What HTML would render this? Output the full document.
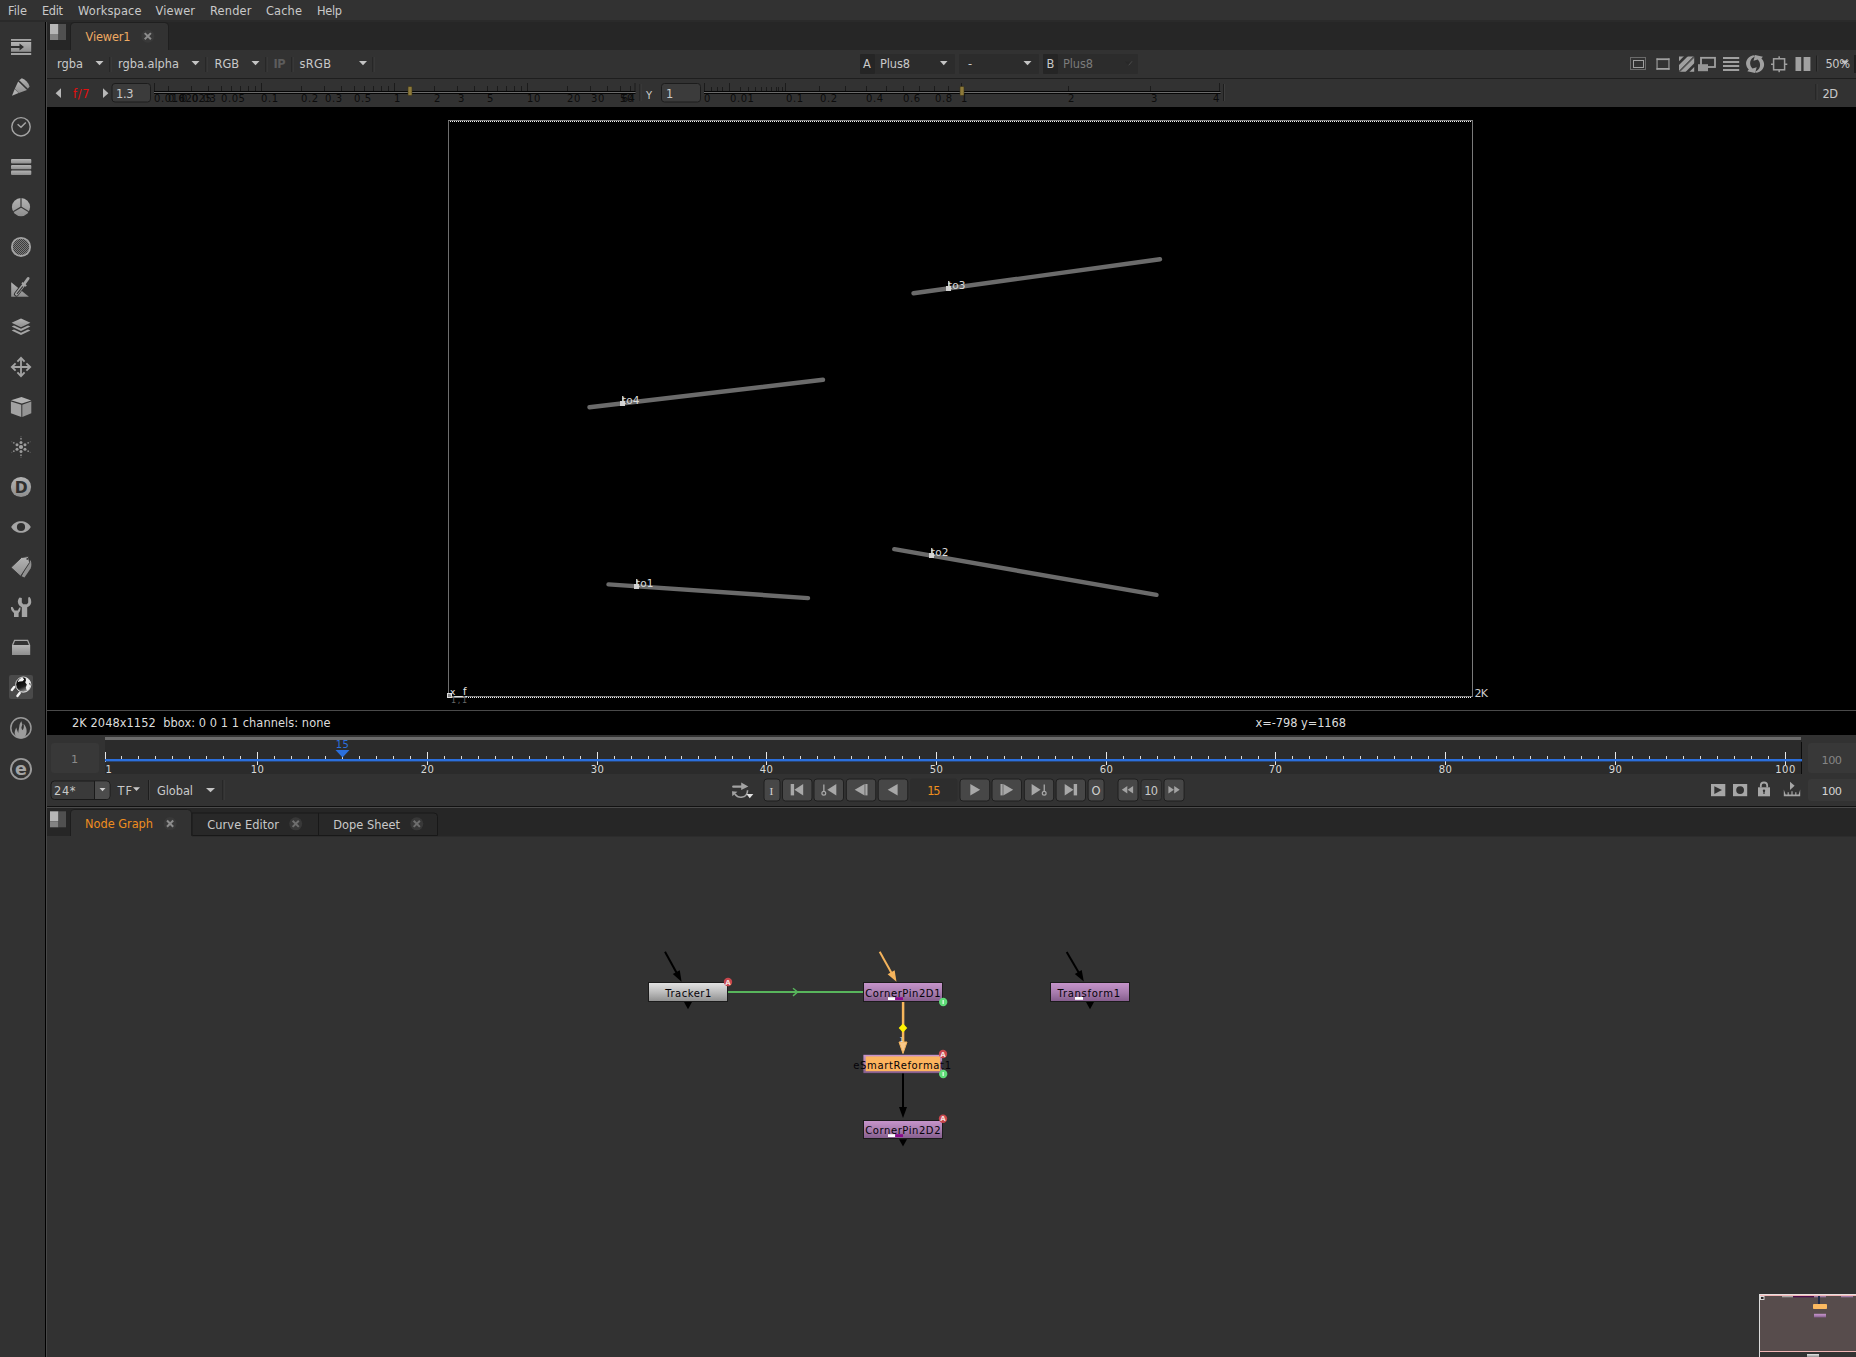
<!DOCTYPE html>
<html lang="en"><head><meta charset="utf-8"><title>Nuke - Viewer1 / Node Graph</title>
<style>
html,body{margin:0;padding:0;background:#323232;}
body{width:1856px;height:1357px;overflow:hidden;position:relative;font-family:"DejaVu Sans","Liberation Sans",sans-serif;}
#app{position:absolute;left:0;top:0;width:1856px;height:1357px;overflow:hidden;background:#323232;}
#app>div{position:absolute;}
#ov{position:absolute;left:0;top:0;}
#ov text{font-family:"DejaVu Sans","Liberation Sans",sans-serif;white-space:pre;}
</style></head>
<body>
<div id="app">
<div style="left:0px;top:0px;width:1856px;height:20px;background:#323232;"></div>
<div style="left:0px;top:20px;width:1856px;height:2px;background:#2a2a2a;"></div>
<div style="left:0px;top:22px;width:45px;height:1335px;background:#323232;"></div>
<div style="left:45px;top:22px;width:1px;height:1335px;background:#000;"></div>
<div style="left:46px;top:22px;width:1px;height:1335px;background:#484848;"></div>
<div style="left:47px;top:22px;width:1809px;height:28px;background:#262626;"></div>
<div style="left:47px;top:50px;width:1809px;height:28px;background:#323232;"></div>
<div style="left:47px;top:78px;width:1809px;height:1px;background:#1e1e1e;"></div>
<div style="left:47px;top:79px;width:1809px;height:28px;background:#323232;"></div>
<div style="left:47px;top:107px;width:1809px;height:628px;background:#000;"></div>
<div style="left:47px;top:710px;width:1809px;height:1px;background:#4a4a4a;"></div>
<div style="left:47px;top:735px;width:1809px;height:39px;background:#323232;"></div>
<div style="left:47px;top:774px;width:1809px;height:32px;background:#323232;"></div>
<div style="left:47px;top:806px;width:1809px;height:1px;background:#111;"></div>
<div style="left:47px;top:807px;width:1809px;height:1px;background:#4a4a4a;"></div>
<div style="left:47px;top:808px;width:1809px;height:28px;background:#262626;"></div>
<div style="left:47px;top:836px;width:1809px;height:521px;background:#323232;"></div>
<div style="left:192px;top:836px;width:1664px;height:1px;background:#2c2c2c;"></div>
<div style="left:105px;top:740px;width:1697px;height:34px;background:#2b2b2b;"></div>
<svg id="ov" width="1856" height="1357" viewBox="0 0 1856 1357">
<text x="8" y="15.3" font-size="11.4" fill="#c9c9c9" textLength="19" lengthAdjust="spacing">File</text>
<text x="42" y="15.3" font-size="11.4" fill="#c9c9c9" textLength="21" lengthAdjust="spacing">Edit</text>
<text x="78" y="15.3" font-size="11.4" fill="#c9c9c9" textLength="63.5" lengthAdjust="spacing">Workspace</text>
<text x="155.5" y="15.3" font-size="11.4" fill="#c9c9c9" textLength="39.5" lengthAdjust="spacing">Viewer</text>
<text x="210" y="15.3" font-size="11.4" fill="#c9c9c9" textLength="41.5" lengthAdjust="spacing">Render</text>
<text x="266" y="15.3" font-size="11.4" fill="#c9c9c9" textLength="36" lengthAdjust="spacing">Cache</text>
<text x="317" y="15.3" font-size="11.4" fill="#c9c9c9" textLength="25" lengthAdjust="spacing">Help</text>
<rect x="50" y="24" width="8.5" height="10" fill="#b6b6b6"/>
<rect x="50" y="34" width="8.5" height="6" fill="#828282"/>
<rect x="58.5" y="24" width="7.5" height="16" fill="#505050"/>
<path d="M71 50V26Q71 23 74 23H165Q168 23 168 26V50Z" fill="#323232"/>
<path d="M70.5 50V26Q70.5 22.5 74 22.5H165Q168.5 22.5 168.5 26V50" fill="none" stroke="#1f1f1f" stroke-width="1"/>
<text x="85.5" y="40.8" font-size="11.4" fill="#eeaa62" textLength="45" lengthAdjust="spacing">Viewer1</text>
<circle cx="147.8" cy="36.2" r="6.5" fill="#393939"/>
<path d="M144.7 33.1L150.9 39.3M150.9 33.1L144.7 39.3" fill="none" stroke="#8c8c8c" stroke-width="2"/>
<text x="57" y="68.3" font-size="11.4" fill="#c9c9c9" textLength="26" lengthAdjust="spacing">rgba</text>
<path d="M95.5 61H103.5L99.5 65.3Z" fill="#c4c4c4"/>
<rect x="109.5" y="57" width="1" height="15" fill="#1d1d1d"/>
<rect x="110.5" y="57" width="1" height="15" fill="#3e3e3e"/>
<text x="118" y="68.3" font-size="11.4" fill="#c9c9c9" textLength="61" lengthAdjust="spacing">rgba.alpha</text>
<path d="M191.5 61H199.5L195.5 65.3Z" fill="#c4c4c4"/>
<rect x="205.5" y="57" width="1" height="15" fill="#1d1d1d"/>
<rect x="206.5" y="57" width="1" height="15" fill="#3e3e3e"/>
<text x="214.5" y="68.3" font-size="11.4" fill="#c9c9c9" textLength="24.5" lengthAdjust="spacing">RGB</text>
<path d="M251.5 61H259.5L255.5 65.3Z" fill="#c4c4c4"/>
<rect x="265.5" y="57" width="1" height="15" fill="#1d1d1d"/>
<rect x="266.5" y="57" width="1" height="15" fill="#3e3e3e"/>
<text x="273.5" y="68.3" font-size="11.4" fill="#5c5c5c" textLength="12" lengthAdjust="spacing" font-weight="bold">IP</text>
<rect x="291.5" y="57" width="1" height="15" fill="#1d1d1d"/>
<rect x="292.5" y="57" width="1" height="15" fill="#3e3e3e"/>
<text x="299.5" y="68.3" font-size="11.4" fill="#c9c9c9" textLength="31.5" lengthAdjust="spacing">sRGB</text>
<path d="M359 61H367L363 65.3Z" fill="#c4c4c4"/>
<rect x="372.5" y="57" width="1" height="15" fill="#1d1d1d"/>
<rect x="373.5" y="57" width="1" height="15" fill="#3e3e3e"/>
<rect x="860" y="54" width="15" height="20" fill="#252525" rx="1"/>
<rect x="875" y="54" width="80" height="20" fill="#2c2c2c" rx="1"/>
<text x="863" y="68.3" font-size="11.4" fill="#c9c9c9" textLength="8" lengthAdjust="spacing">A</text>
<text x="880" y="68.3" font-size="11.4" fill="#c9c9c9" textLength="30" lengthAdjust="spacing">Plus8</text>
<path d="M940 61H947.5L943.75 65.3Z" fill="#c4c4c4"/>
<rect x="959" y="54" width="80" height="20" fill="#2c2c2c" rx="1"/>
<text x="968" y="68.3" font-size="11.4" fill="#c9c9c9">-</text>
<path d="M1023.5 61H1031.5L1027.5 65.3Z" fill="#c4c4c4"/>
<rect x="1043" y="54" width="15" height="20" fill="#252525" rx="1"/>
<rect x="1058" y="54" width="80" height="20" fill="#2c2c2c" rx="1"/>
<text x="1046.5" y="68.3" font-size="11.4" fill="#c9c9c9" textLength="7.5" lengthAdjust="spacing">B</text>
<text x="1063" y="68.3" font-size="11.4" fill="#7b7b7b" textLength="30" lengthAdjust="spacing">Plus8</text>
<path d="M1125 61.5H1132L1128.5 65.5Z" fill="#282828"/>
<path d="M1128.7 65.3L1132 61.3" fill="none" stroke="#4c4c4c" stroke-width="1"/>
<path d="M61 88.3V98L55.6 93.2Z" fill="#b8b8b8"/>
<path d="M103 88.3V98L108.4 93.2Z" fill="#b8b8b8"/>
<text x="73" y="98.3" font-size="11.4" fill="#e30f0f" textLength="16.5" lengthAdjust="spacing">f/7</text>
<rect x="112" y="83.5" width="38.5" height="18.5" rx="3" fill="#3b3b3b" stroke="#1c1c1c"/>
<text x="116" y="98.3" font-size="11.4" fill="#c9c9c9" textLength="17.5" lengthAdjust="spacing">1.3</text>
<rect x="154" y="91" width="481.5" height="1" fill="#050505"/>
<rect x="154" y="92" width="481.5" height="1" fill="#6c6c6c"/>
<rect x="154" y="93" width="481.5" height="1" fill="#050505"/>
<rect x="154" y="83" width="1" height="8" fill="#1b1b1b"/>
<rect x="634.5" y="83" width="1" height="8" fill="#1b1b1b"/>
<rect x="168" y="86" width="1" height="5" fill="#1b1b1b"/>
<rect x="191" y="86" width="1" height="5" fill="#1b1b1b"/>
<rect x="208" y="86" width="1" height="5" fill="#1b1b1b"/>
<rect x="221" y="86" width="1" height="5" fill="#1b1b1b"/>
<rect x="231" y="86" width="1" height="5" fill="#1b1b1b"/>
<rect x="240" y="86" width="1" height="5" fill="#1b1b1b"/>
<rect x="248" y="86" width="1" height="5" fill="#1b1b1b"/>
<rect x="255" y="86" width="1" height="5" fill="#1b1b1b"/>
<rect x="261" y="83" width="1" height="8" fill="#1b1b1b"/>
<rect x="301" y="86" width="1" height="5" fill="#1b1b1b"/>
<rect x="324" y="86" width="1" height="5" fill="#1b1b1b"/>
<rect x="341" y="86" width="1" height="5" fill="#1b1b1b"/>
<rect x="354" y="86" width="1" height="5" fill="#1b1b1b"/>
<rect x="364" y="86" width="1" height="5" fill="#1b1b1b"/>
<rect x="373" y="86" width="1" height="5" fill="#1b1b1b"/>
<rect x="381" y="86" width="1" height="5" fill="#1b1b1b"/>
<rect x="388" y="86" width="1" height="5" fill="#1b1b1b"/>
<rect x="394" y="83" width="1" height="8" fill="#1b1b1b"/>
<rect x="434" y="86" width="1" height="5" fill="#1b1b1b"/>
<rect x="457" y="86" width="1" height="5" fill="#1b1b1b"/>
<rect x="474" y="86" width="1" height="5" fill="#1b1b1b"/>
<rect x="487" y="86" width="1" height="5" fill="#1b1b1b"/>
<rect x="497" y="86" width="1" height="5" fill="#1b1b1b"/>
<rect x="506" y="86" width="1" height="5" fill="#1b1b1b"/>
<rect x="514" y="86" width="1" height="5" fill="#1b1b1b"/>
<rect x="521" y="86" width="1" height="5" fill="#1b1b1b"/>
<rect x="527" y="83" width="1" height="8" fill="#1b1b1b"/>
<rect x="567" y="86" width="1" height="5" fill="#1b1b1b"/>
<rect x="590" y="86" width="1" height="5" fill="#1b1b1b"/>
<rect x="607" y="86" width="1" height="5" fill="#1b1b1b"/>
<rect x="620" y="86" width="1" height="5" fill="#1b1b1b"/>
<rect x="630" y="86" width="1" height="5" fill="#1b1b1b"/>
<text x="154" y="101.7" font-size="10" fill="#0c0c0c" letter-spacing="0.55">0.016</text>
<text x="168" y="101.7" font-size="10" fill="#0c0c0c" letter-spacing="0.55">0.02</text>
<text x="181" y="101.7" font-size="10" fill="#0c0c0c" letter-spacing="0.55">0.025</text>
<text x="192" y="101.7" font-size="10" fill="#0c0c0c" letter-spacing="0.55">0.03</text>
<text x="221" y="101.7" font-size="10" fill="#0c0c0c" letter-spacing="0.55">0.05</text>
<text x="261" y="101.7" font-size="10" fill="#0c0c0c" letter-spacing="0.55">0.1</text>
<text x="301" y="101.7" font-size="10" fill="#0c0c0c" letter-spacing="0.55">0.2</text>
<text x="325" y="101.7" font-size="10" fill="#0c0c0c" letter-spacing="0.55">0.3</text>
<text x="354" y="101.7" font-size="10" fill="#0c0c0c" letter-spacing="0.55">0.5</text>
<text x="394" y="101.7" font-size="10" fill="#0c0c0c" letter-spacing="0.55">1</text>
<text x="434" y="101.7" font-size="10" fill="#0c0c0c" letter-spacing="0.55">2</text>
<text x="458" y="101.7" font-size="10" fill="#0c0c0c" letter-spacing="0.55">3</text>
<text x="487" y="101.7" font-size="10" fill="#0c0c0c" letter-spacing="0.55">5</text>
<text x="527" y="101.7" font-size="10" fill="#0c0c0c" letter-spacing="0.55">10</text>
<text x="567" y="101.7" font-size="10" fill="#0c0c0c" letter-spacing="0.55">20</text>
<text x="591" y="101.7" font-size="10" fill="#0c0c0c" letter-spacing="0.55">30</text>
<text x="620" y="101.7" font-size="10" fill="#0c0c0c" letter-spacing="0.55">50</text>
<text x="635.5" y="101.7" font-size="10" fill="#0c0c0c" text-anchor="end" letter-spacing="0.55">64</text>
<rect x="408" y="86.5" width="4" height="9" fill="#8d7a3a" rx="0.8" stroke="#3a3218" stroke-width="0.6"/>
<rect x="639.5" y="84" width="1" height="17" fill="#1d1d1d"/>
<rect x="640.5" y="84" width="1" height="17" fill="#3e3e3e"/>
<text x="646" y="98.8" font-size="10" fill="#c9c9c9" textLength="7" lengthAdjust="spacing">Y</text>
<rect x="661.5" y="83.5" width="39" height="18.5" rx="3" fill="#3b3b3b" stroke="#1c1c1c"/>
<text x="666" y="98.3" font-size="11.4" fill="#c9c9c9">1</text>
<rect x="704" y="91" width="516.5" height="1" fill="#050505"/>
<rect x="704" y="92" width="516.5" height="1" fill="#6c6c6c"/>
<rect x="704" y="93" width="516.5" height="1" fill="#050505"/>
<rect x="704" y="83" width="1" height="8" fill="#1b1b1b"/>
<rect x="729" y="83" width="1" height="8" fill="#1b1b1b"/>
<rect x="785" y="83" width="1" height="8" fill="#1b1b1b"/>
<rect x="819" y="86" width="1" height="5" fill="#1b1b1b"/>
<rect x="845" y="86" width="1" height="5" fill="#1b1b1b"/>
<rect x="866" y="86" width="1" height="5" fill="#1b1b1b"/>
<rect x="886" y="86" width="1" height="5" fill="#1b1b1b"/>
<rect x="903" y="86" width="1" height="5" fill="#1b1b1b"/>
<rect x="919" y="86" width="1" height="5" fill="#1b1b1b"/>
<rect x="934" y="86" width="1" height="5" fill="#1b1b1b"/>
<rect x="948" y="86" width="1" height="5" fill="#1b1b1b"/>
<rect x="961" y="83" width="1" height="8" fill="#1b1b1b"/>
<rect x="1068" y="86" width="1" height="5" fill="#1b1b1b"/>
<rect x="1150" y="86" width="1" height="5" fill="#1b1b1b"/>
<rect x="1219" y="83" width="1" height="8" fill="#1b1b1b"/>
<rect x="711" y="87" width="1" height="4" fill="#1b1b1b"/>
<rect x="717" y="87" width="1" height="4" fill="#1b1b1b"/>
<rect x="722" y="87" width="1" height="4" fill="#1b1b1b"/>
<rect x="740" y="87" width="1" height="4" fill="#1b1b1b"/>
<rect x="748" y="87" width="1" height="4" fill="#1b1b1b"/>
<rect x="755" y="87" width="1" height="4" fill="#1b1b1b"/>
<rect x="761" y="87" width="1" height="4" fill="#1b1b1b"/>
<rect x="766" y="87" width="1" height="4" fill="#1b1b1b"/>
<rect x="771" y="87" width="1" height="4" fill="#1b1b1b"/>
<rect x="776" y="87" width="1" height="4" fill="#1b1b1b"/>
<rect x="778" y="87" width="1" height="4" fill="#1b1b1b"/>
<rect x="782" y="87" width="1" height="4" fill="#1b1b1b"/>
<text x="704" y="101.7" font-size="10" fill="#0c0c0c" letter-spacing="0.55">0</text>
<text x="730" y="101.7" font-size="10" fill="#0c0c0c" letter-spacing="0.55">0.01</text>
<text x="786" y="101.7" font-size="10" fill="#0c0c0c" letter-spacing="0.55">0.1</text>
<text x="820" y="101.7" font-size="10" fill="#0c0c0c" letter-spacing="0.55">0.2</text>
<text x="866" y="101.7" font-size="10" fill="#0c0c0c" letter-spacing="0.55">0.4</text>
<text x="903" y="101.7" font-size="10" fill="#0c0c0c" letter-spacing="0.55">0.6</text>
<text x="935" y="101.7" font-size="10" fill="#0c0c0c" letter-spacing="0.55">0.8</text>
<text x="961" y="101.7" font-size="10" fill="#0c0c0c" letter-spacing="0.55">1</text>
<text x="1068" y="101.7" font-size="10" fill="#0c0c0c" letter-spacing="0.55">2</text>
<text x="1151" y="101.7" font-size="10" fill="#0c0c0c" letter-spacing="0.55">3</text>
<text x="1213" y="101.7" font-size="10" fill="#0c0c0c">4</text>
<rect x="960" y="86.5" width="4" height="9" fill="#8d7a3a" rx="0.8" stroke="#3a3218" stroke-width="0.6"/>
<rect x="1223" y="84" width="1" height="17" fill="#1d1d1d"/>
<rect x="1224" y="84" width="1" height="17" fill="#3e3e3e"/>
<rect x="1630.5" y="57.5" width="15" height="12" fill="none" stroke="#6a6a6a"/>
<rect x="1633.5" y="60.5" width="10" height="7" fill="none" stroke="#a0a0a0" stroke-width="1"/>
<rect x="1656.5" y="58.3" width="13" height="1.8" fill="#a0a0a0"/>
<rect x="1656.5" y="68" width="13" height="1.8" fill="#a0a0a0"/>
<rect x="1656.5" y="58.3" width="1.1" height="11.5" fill="#a0a0a0"/>
<rect x="1668.4" y="58.3" width="1.1" height="11.5" fill="#a0a0a0"/>
<clipPath id="cs"><rect x="1679" y="56.5" width="15.2" height="15.3"/></clipPath>
<g clip-path="url(#cs)"><line x1="1684" y1="51.5" x2="1674" y2="61.5" stroke="#a0a0a0" stroke-width="6.6"/><line x1="1695.5" y1="51.5" x2="1674" y2="73" stroke="#a0a0a0" stroke-width="4.1"/><line x1="1703.1" y1="51.5" x2="1674" y2="80.6" stroke="#a0a0a0" stroke-width="4.1"/><line x1="1714.5" y1="51.5" x2="1674" y2="92" stroke="#a0a0a0" stroke-width="6.6"/><line x1="1699.3" y1="51.5" x2="1674" y2="76.8" stroke="#555" stroke-width="1.2"/></g>
<rect x="1701" y="57.8" width="14" height="9.2" fill="none" stroke="#a0a0a0" stroke-width="1.8"/>
<rect x="1698" y="64.2" width="10" height="7" fill="#969696"/>
<rect x="1723" y="57" width="16.2" height="2" fill="#a0a0a0"/>
<rect x="1723" y="61" width="16.2" height="2" fill="#a0a0a0"/>
<rect x="1723" y="65" width="16.2" height="2" fill="#a0a0a0"/>
<rect x="1723" y="69" width="16.2" height="2" fill="#a0a0a0"/>
<g transform="translate(1755.1 64)" fill="#a0a0a0"><path d="M-0.6 -8.7C-6.4 -8.4 -9.7 -3.6 -8.9 0.8C-8.5 2.8 -7.6 4.3 -6.3 5.5L-7.8 7.2L0 8.9L1.6 3.2L-2.6 4.6C-4.6 2.8 -5.4 0 -4.8 -2.4C-4.2 -4.8 -2.6 -6.6 -0.2 -7.6Z"/><path d="M-0.6 -8.7C-6.4 -8.4 -9.7 -3.6 -8.9 0.8C-8.5 2.8 -7.6 4.3 -6.3 5.5L-7.8 7.2L0 8.9L1.6 3.2L-2.6 4.6C-4.6 2.8 -5.4 0 -4.8 -2.4C-4.2 -4.8 -2.6 -6.6 -0.2 -7.6Z" transform="rotate(180)"/></g>
<rect x="1773.6" y="58.8" width="11" height="11" fill="none" stroke="#a0a0a0" stroke-width="1.5"/>
<rect x="1778.4" y="56.3" width="1.5" height="2.5" fill="#a0a0a0"/>
<rect x="1778.4" y="69.8" width="1.5" height="2.4" fill="#a0a0a0"/>
<rect x="1771" y="63.5" width="2.5" height="1.5" fill="#a0a0a0"/>
<rect x="1784.8" y="63.5" width="2.5" height="1.5" fill="#a0a0a0"/>
<rect x="1795.5" y="57" width="5.7" height="14" fill="#a0a0a0"/>
<rect x="1803.6" y="57" width="6.8" height="14" fill="#a0a0a0"/>
<rect x="1816.2" y="55.5" width="1" height="16" fill="#1d1d1d"/>
<rect x="1817.2" y="55.5" width="1" height="16" fill="#3e3e3e"/>
<text x="1825.5" y="68.3" font-size="11.4" fill="#c9c9c9" textLength="24.5" lengthAdjust="spacing">50%</text>
<path d="M1841 60.5H1849L1845 64.8Z" fill="#c4c4c4"/>
<rect x="1854" y="55" width="2" height="18" fill="#1e1e1e"/>
<rect x="1815.5" y="84" width="1" height="16" fill="#1d1d1d"/>
<rect x="1816.5" y="84" width="1" height="16" fill="#3e3e3e"/>
<text x="1822.5" y="98.3" font-size="11.4" fill="#c9c9c9" textLength="15.5" lengthAdjust="spacing">2D</text>
<rect x="448" y="120" width="1" height="577" fill="#6e6e6e"/>
<rect x="1472" y="120" width="1" height="577" fill="#7a7a7a"/>
<rect x="448" y="120" width="1025" height="1" fill="#808080"/>
<rect x="448" y="696" width="1025" height="1" fill="#808080"/>
<line x1="450" y1="121.5" x2="1472" y2="121.5" stroke="#f2f2f2" stroke-width="1" stroke-dasharray="1 1"/>
<line x1="468" y1="697.5" x2="1472" y2="697.5" stroke="#f2f2f2" stroke-width="1" stroke-dasharray="1 1"/>
<line x1="913.5" y1="293.2" x2="1160" y2="259.3" stroke="#6b6b6b" stroke-width="4.4" stroke-linecap="round"/>
<line x1="589.5" y1="407.3" x2="823" y2="379.8" stroke="#6b6b6b" stroke-width="4.4" stroke-linecap="round"/>
<line x1="608.5" y1="584.4" x2="808" y2="598.1" stroke="#6b6b6b" stroke-width="4.4" stroke-linecap="round"/>
<line x1="894.3" y1="549.2" x2="1156.5" y2="594.9" stroke="#6b6b6b" stroke-width="4.4" stroke-linecap="round"/>
<rect x="946" y="286" width="5" height="5" fill="#d2d2d2"/>
<rect x="948" y="281" width="1" height="5" fill="#bdbdbd"/>
<text x="948" y="288.5" font-size="10.5" fill="#dadada" textLength="17.5" lengthAdjust="spacing">to3</text>
<rect x="620" y="401" width="5" height="5" fill="#d2d2d2"/>
<rect x="622" y="396" width="1" height="5" fill="#bdbdbd"/>
<text x="622" y="403.5" font-size="10.5" fill="#dadada" textLength="17.5" lengthAdjust="spacing">to4</text>
<rect x="634" y="584" width="5" height="5" fill="#d2d2d2"/>
<rect x="636" y="579" width="1" height="5" fill="#bdbdbd"/>
<text x="636" y="586.5" font-size="10.5" fill="#dadada" textLength="17.5" lengthAdjust="spacing">to1</text>
<rect x="929" y="553" width="5" height="5" fill="#d2d2d2"/>
<rect x="931" y="548" width="1" height="5" fill="#bdbdbd"/>
<text x="931" y="555.5" font-size="10.5" fill="#dadada" textLength="17.5" lengthAdjust="spacing">to2</text>
<text x="1474.5" y="697" font-size="11" fill="#d0d0d0" textLength="13.5" lengthAdjust="spacing">2K</text>
<rect x="447.5" y="693.5" width="4" height="4" fill="#888" stroke="#ddd"/>
<rect x="452" y="696" width="15" height="1.6" fill="#e0e0e0"/>
<text x="450" y="694.5" font-size="9" fill="#e6e6e6">x</text>
<text x="463" y="695" font-size="10" fill="#e6e6e6">f</text>
<text x="451" y="702.5" font-size="8" fill="#6a6a6a" textLength="16" lengthAdjust="spacing">1,1</text>
<text x="72" y="726.8" font-size="11.4" fill="#dcdcdc" textLength="258.5" lengthAdjust="spacing" xml:space="preserve">2K 2048x1152  bbox: 0 0 1 1 channels: none</text>
<text x="1255.5" y="726.8" font-size="11.4" fill="#dcdcdc" textLength="90.5" lengthAdjust="spacing">x=-798 y=1168</text>
<rect x="105" y="737" width="1696" height="3" fill="#6c6c6c"/>
<rect x="1801" y="742" width="1" height="32" fill="#0c0c0c"/>
<rect x="51" y="743" width="48" height="30" fill="#383838" rx="3"/>
<text x="74.5" y="763.4" font-size="11.3" fill="#8a8a8a" text-anchor="middle">1</text>
<rect x="1808" y="743" width="60" height="30" fill="#383838" rx="3"/>
<text x="1821.5" y="763.6" font-size="11.3" fill="#858585" textLength="20.5" lengthAdjust="spacing">100</text>
<rect x="105" y="752" width="1" height="10" fill="#e6e6e6"/>
<rect x="121" y="756" width="1" height="3" fill="#dcdcdc"/>
<rect x="138" y="756" width="1" height="3" fill="#dcdcdc"/>
<rect x="155" y="756" width="1" height="3" fill="#dcdcdc"/>
<rect x="172" y="756" width="1" height="3" fill="#dcdcdc"/>
<rect x="189" y="756" width="1" height="3" fill="#dcdcdc"/>
<rect x="206" y="756" width="1" height="3" fill="#dcdcdc"/>
<rect x="223" y="756" width="1" height="3" fill="#dcdcdc"/>
<rect x="240" y="756" width="1" height="3" fill="#dcdcdc"/>
<rect x="257" y="752" width="1" height="13" fill="#e6e6e6"/>
<rect x="274" y="756" width="1" height="3" fill="#dcdcdc"/>
<rect x="291" y="756" width="1" height="3" fill="#dcdcdc"/>
<rect x="308" y="756" width="1" height="3" fill="#dcdcdc"/>
<rect x="325" y="756" width="1" height="3" fill="#dcdcdc"/>
<rect x="342" y="756" width="1" height="3" fill="#dcdcdc"/>
<rect x="359" y="756" width="1" height="3" fill="#dcdcdc"/>
<rect x="376" y="756" width="1" height="3" fill="#dcdcdc"/>
<rect x="393" y="756" width="1" height="3" fill="#dcdcdc"/>
<rect x="410" y="756" width="1" height="3" fill="#dcdcdc"/>
<rect x="427" y="752" width="1" height="13" fill="#e6e6e6"/>
<rect x="444" y="756" width="1" height="3" fill="#dcdcdc"/>
<rect x="461" y="756" width="1" height="3" fill="#dcdcdc"/>
<rect x="478" y="756" width="1" height="3" fill="#dcdcdc"/>
<rect x="495" y="756" width="1" height="3" fill="#dcdcdc"/>
<rect x="512" y="756" width="1" height="3" fill="#dcdcdc"/>
<rect x="529" y="756" width="1" height="3" fill="#dcdcdc"/>
<rect x="546" y="756" width="1" height="3" fill="#dcdcdc"/>
<rect x="563" y="756" width="1" height="3" fill="#dcdcdc"/>
<rect x="580" y="756" width="1" height="3" fill="#dcdcdc"/>
<rect x="597" y="752" width="1" height="13" fill="#e6e6e6"/>
<rect x="614" y="756" width="1" height="3" fill="#dcdcdc"/>
<rect x="631" y="756" width="1" height="3" fill="#dcdcdc"/>
<rect x="648" y="756" width="1" height="3" fill="#dcdcdc"/>
<rect x="665" y="756" width="1" height="3" fill="#dcdcdc"/>
<rect x="681" y="756" width="1" height="3" fill="#dcdcdc"/>
<rect x="698" y="756" width="1" height="3" fill="#dcdcdc"/>
<rect x="715" y="756" width="1" height="3" fill="#dcdcdc"/>
<rect x="732" y="756" width="1" height="3" fill="#dcdcdc"/>
<rect x="749" y="756" width="1" height="3" fill="#dcdcdc"/>
<rect x="766" y="752" width="1" height="13" fill="#e6e6e6"/>
<rect x="783" y="756" width="1" height="3" fill="#dcdcdc"/>
<rect x="800" y="756" width="1" height="3" fill="#dcdcdc"/>
<rect x="817" y="756" width="1" height="3" fill="#dcdcdc"/>
<rect x="834" y="756" width="1" height="3" fill="#dcdcdc"/>
<rect x="851" y="756" width="1" height="3" fill="#dcdcdc"/>
<rect x="868" y="756" width="1" height="3" fill="#dcdcdc"/>
<rect x="885" y="756" width="1" height="3" fill="#dcdcdc"/>
<rect x="902" y="756" width="1" height="3" fill="#dcdcdc"/>
<rect x="919" y="756" width="1" height="3" fill="#dcdcdc"/>
<rect x="936" y="752" width="1" height="13" fill="#e6e6e6"/>
<rect x="953" y="756" width="1" height="3" fill="#dcdcdc"/>
<rect x="970" y="756" width="1" height="3" fill="#dcdcdc"/>
<rect x="987" y="756" width="1" height="3" fill="#dcdcdc"/>
<rect x="1004" y="756" width="1" height="3" fill="#dcdcdc"/>
<rect x="1021" y="756" width="1" height="3" fill="#dcdcdc"/>
<rect x="1038" y="756" width="1" height="3" fill="#dcdcdc"/>
<rect x="1055" y="756" width="1" height="3" fill="#dcdcdc"/>
<rect x="1072" y="756" width="1" height="3" fill="#dcdcdc"/>
<rect x="1089" y="756" width="1" height="3" fill="#dcdcdc"/>
<rect x="1106" y="752" width="1" height="13" fill="#e6e6e6"/>
<rect x="1123" y="756" width="1" height="3" fill="#dcdcdc"/>
<rect x="1140" y="756" width="1" height="3" fill="#dcdcdc"/>
<rect x="1157" y="756" width="1" height="3" fill="#dcdcdc"/>
<rect x="1174" y="756" width="1" height="3" fill="#dcdcdc"/>
<rect x="1191" y="756" width="1" height="3" fill="#dcdcdc"/>
<rect x="1208" y="756" width="1" height="3" fill="#dcdcdc"/>
<rect x="1225" y="756" width="1" height="3" fill="#dcdcdc"/>
<rect x="1241" y="756" width="1" height="3" fill="#dcdcdc"/>
<rect x="1258" y="756" width="1" height="3" fill="#dcdcdc"/>
<rect x="1275" y="752" width="1" height="13" fill="#e6e6e6"/>
<rect x="1292" y="756" width="1" height="3" fill="#dcdcdc"/>
<rect x="1309" y="756" width="1" height="3" fill="#dcdcdc"/>
<rect x="1326" y="756" width="1" height="3" fill="#dcdcdc"/>
<rect x="1343" y="756" width="1" height="3" fill="#dcdcdc"/>
<rect x="1360" y="756" width="1" height="3" fill="#dcdcdc"/>
<rect x="1377" y="756" width="1" height="3" fill="#dcdcdc"/>
<rect x="1394" y="756" width="1" height="3" fill="#dcdcdc"/>
<rect x="1411" y="756" width="1" height="3" fill="#dcdcdc"/>
<rect x="1428" y="756" width="1" height="3" fill="#dcdcdc"/>
<rect x="1445" y="752" width="1" height="13" fill="#e6e6e6"/>
<rect x="1462" y="756" width="1" height="3" fill="#dcdcdc"/>
<rect x="1479" y="756" width="1" height="3" fill="#dcdcdc"/>
<rect x="1496" y="756" width="1" height="3" fill="#dcdcdc"/>
<rect x="1513" y="756" width="1" height="3" fill="#dcdcdc"/>
<rect x="1530" y="756" width="1" height="3" fill="#dcdcdc"/>
<rect x="1547" y="756" width="1" height="3" fill="#dcdcdc"/>
<rect x="1564" y="756" width="1" height="3" fill="#dcdcdc"/>
<rect x="1581" y="756" width="1" height="3" fill="#dcdcdc"/>
<rect x="1598" y="756" width="1" height="3" fill="#dcdcdc"/>
<rect x="1615" y="752" width="1" height="13" fill="#e6e6e6"/>
<rect x="1632" y="756" width="1" height="3" fill="#dcdcdc"/>
<rect x="1649" y="756" width="1" height="3" fill="#dcdcdc"/>
<rect x="1666" y="756" width="1" height="3" fill="#dcdcdc"/>
<rect x="1683" y="756" width="1" height="3" fill="#dcdcdc"/>
<rect x="1700" y="756" width="1" height="3" fill="#dcdcdc"/>
<rect x="1717" y="756" width="1" height="3" fill="#dcdcdc"/>
<rect x="1734" y="756" width="1" height="3" fill="#dcdcdc"/>
<rect x="1751" y="756" width="1" height="3" fill="#dcdcdc"/>
<rect x="1768" y="756" width="1" height="3" fill="#dcdcdc"/>
<rect x="1785" y="752" width="1" height="13" fill="#e6e6e6"/>
<rect x="105" y="759" width="1697" height="2.4" fill="#2b6fdc"/>
<text x="105.4" y="773" font-size="10" fill="#d8d8d8">1</text>
<text x="257.5" y="773" font-size="10" fill="#d8d8d8" text-anchor="middle" letter-spacing="0.5">10</text>
<text x="427.5" y="773" font-size="10" fill="#d8d8d8" text-anchor="middle" letter-spacing="0.5">20</text>
<text x="597.5" y="773" font-size="10" fill="#d8d8d8" text-anchor="middle" letter-spacing="0.5">30</text>
<text x="766.5" y="773" font-size="10" fill="#d8d8d8" text-anchor="middle" letter-spacing="0.5">40</text>
<text x="936.5" y="773" font-size="10" fill="#d8d8d8" text-anchor="middle" letter-spacing="0.5">50</text>
<text x="1106.5" y="773" font-size="10" fill="#d8d8d8" text-anchor="middle" letter-spacing="0.5">60</text>
<text x="1275.5" y="773" font-size="10" fill="#d8d8d8" text-anchor="middle" letter-spacing="0.5">70</text>
<text x="1445.5" y="773" font-size="10" fill="#d8d8d8" text-anchor="middle" letter-spacing="0.5">80</text>
<text x="1615.5" y="773" font-size="10" fill="#d8d8d8" text-anchor="middle" letter-spacing="0.5">90</text>
<text x="1785.5" y="773" font-size="10" fill="#d8d8d8" text-anchor="middle" letter-spacing="0.5">100</text>
<path d="M335.5 750H349.5L342.5 757.5Z" fill="#2b6fdc"/>
<text x="342.5" y="748.3" font-size="10" fill="#2b6fdc" text-anchor="middle" letter-spacing="0.5">15</text>
<rect x="51" y="781" width="59" height="18.5" rx="3.5" fill="#3a3a3a" stroke="#1a1a1a"/>
<path d="M95 781.5H106.5Q109.5 781.5 109.5 784.5V796Q109.5 799 106.5 799H95Z" fill="#4c4c4c"/>
<rect x="94" y="781" width="1" height="18.5" fill="#1a1a1a"/>
<text x="54" y="795.3" font-size="11.4" fill="#c9c9c9" textLength="21.5" lengthAdjust="spacing">24*</text>
<path d="M99.5 788H105.5L102.5 791.3Z" fill="#d0d0d0"/>
<text x="117.5" y="795.3" font-size="11.4" fill="#c9c9c9" textLength="14.5" lengthAdjust="spacing">TF</text>
<path d="M133 787.2H140L136.5 791Z" fill="#c8c8c8"/>
<rect x="148" y="780" width="1" height="20" fill="#1d1d1d"/>
<rect x="149" y="780" width="1" height="20" fill="#3e3e3e"/>
<text x="157" y="795.3" font-size="11.4" fill="#c9c9c9" textLength="36" lengthAdjust="spacing">Global</text>
<path d="M206 788H215L210.5 792.3Z" fill="#c4c4c4"/>
<rect x="222.5" y="780" width="1" height="20" fill="#1d1d1d"/>
<rect x="223.5" y="780" width="1" height="20" fill="#3e3e3e"/>
<path d="M733.3 785.4H741.2V782.6L748.3 786.5L741.2 790V787.8H733.3Q732.1 787.8 732.1 786.6Q732.1 785.4 733.3 785.4Z" fill="#a2a2a2"/>
<path d="M747.6 790.2C747.2 798.5 738.5 799 734.8 794" fill="none" stroke="#a2a2a2" stroke-width="1.6"/>
<path d="M732 791.2L737.4 791.7L732.3 796.2Z" fill="#a2a2a2"/>
<path d="M746.4 794H753.3L749.8 798.3Z" fill="#e2e2e2"/>
<rect x="764" y="779" width="16" height="22" rx="3" fill="#474747" stroke="#1f1f1f"/>
<text x="769.6" y="795.1" font-size="11.4" fill="#d4d4d4" style="font-family:'Liberation Serif','DejaVu Serif',serif">I</text>
<rect x="782.5" y="779" width="29.5" height="22" rx="3" fill="#474747" stroke="#1f1f1f"/>
<rect x="790.7" y="784" width="3.4" height="11.4" fill="#a8a8a8"/>
<path d="M803.2 784V795.4L794.4 789.7Z" fill="#a8a8a8"/>
<rect x="814" y="779" width="29.5" height="22" rx="3" fill="#474747" stroke="#1f1f1f"/>
<path d="M836.3 784V795.4L827.3 789.7Z" fill="#a8a8a8"/>
<circle cx="823.8" cy="793.2" r="1.9" fill="none" stroke="#a8a8a8" stroke-width="1.2"/>
<rect x="823.2" y="784.5" width="1.3" height="7" fill="#a8a8a8"/>
<rect x="846.3" y="779" width="29.5" height="22" rx="3" fill="#474747" stroke="#1f1f1f"/>
<path d="M864.6 784V795.4L854.7 789.7Z" fill="#a8a8a8"/>
<rect x="865.3" y="784" width="2.2" height="11.4" fill="#a8a8a8"/>
<rect x="878.2" y="779" width="29.6" height="22" rx="3" fill="#474747" stroke="#1f1f1f"/>
<path d="M897.6 784V795.4L887.7 789.7Z" fill="#a8a8a8"/>
<rect x="910" y="778.5" width="47.5" height="23" fill="#2d2d2d" rx="3"/>
<text x="927.2" y="795.3" font-size="11.4" fill="#f0901e" textLength="13.3" lengthAdjust="spacing">15</text>
<rect x="960" y="779" width="29.7" height="22" rx="3" fill="#474747" stroke="#1f1f1f"/>
<path d="M970.3 784V795.4L980.2 789.7Z" fill="#a8a8a8"/>
<rect x="992" y="779" width="29.5" height="22" rx="3" fill="#474747" stroke="#1f1f1f"/>
<rect x="1000.5" y="784" width="2.2" height="11.4" fill="#a8a8a8"/>
<path d="M1003.3 784V795.4L1013.2 789.7Z" fill="#a8a8a8"/>
<rect x="1024.3" y="779" width="29.4" height="22" rx="3" fill="#474747" stroke="#1f1f1f"/>
<path d="M1031.6 784V795.4L1040.6 789.7Z" fill="#a8a8a8"/>
<circle cx="1044.2" cy="793.2" r="1.9" fill="none" stroke="#a8a8a8" stroke-width="1.2"/>
<rect x="1043.6" y="784.5" width="1.3" height="7" fill="#a8a8a8"/>
<rect x="1056.1" y="779" width="29.4" height="22" rx="3" fill="#474747" stroke="#1f1f1f"/>
<path d="M1064.7 784V795.4L1073.5 789.7Z" fill="#a8a8a8"/>
<rect x="1073.7" y="784" width="3.4" height="11.4" fill="#a8a8a8"/>
<rect x="1088.1" y="779" width="16" height="22" rx="3" fill="#474747" stroke="#1f1f1f"/>
<text x="1091.5" y="794.5" font-size="11.5" fill="#d0d0d0" textLength="9" lengthAdjust="spacing">O</text>
<rect x="1118" y="779" width="20" height="22" rx="3" fill="#474747" stroke="#1f1f1f"/>
<path d="M1127.3 786V793.6L1121.8 789.8Z" fill="#a2a2a2"/>
<path d="M1133.1 786V793.6L1127.6 789.8Z" fill="#a2a2a2"/>
<rect x="1141" y="779.5" width="20.5" height="21" rx="3" fill="#3a3a3a" stroke="#262626"/>
<text x="1144.3" y="795.3" font-size="11.4" fill="#c9c9c9" textLength="13.7" lengthAdjust="spacing">10</text>
<rect x="1164" y="779" width="20.1" height="22" rx="3" fill="#474747" stroke="#1f1f1f"/>
<path d="M1168.4 786V793.6L1173.9 789.8Z" fill="#a2a2a2"/>
<path d="M1174.2 786V793.6L1179.7 789.8Z" fill="#a2a2a2"/>
<rect x="1711" y="784" width="14.3" height="12.2" fill="#a6a6a6"/>
<path d="M1714.3 786.3V794L1722 790.1Z" fill="#323232"/>
<rect x="1733" y="784" width="14.2" height="12.2" fill="#a6a6a6"/>
<circle cx="1740.1" cy="790.1" r="3.9" fill="#323232"/>
<rect x="1758" y="787.3" width="12" height="9" fill="#a6a6a6"/>
<path d="M1760.8 787.5V785.5C1760.8 781.5 1767.2 781.5 1767.2 785.5V787.5" fill="none" stroke="#a6a6a6" stroke-width="1.8"/>
<circle cx="1764" cy="790.7" r="1.2" fill="#323232"/>
<rect x="1763.4" y="791" width="1.2" height="3" fill="#323232"/>
<path d="M1790 781.7V790L1794.6 785.8Z" fill="#a6a6a6"/>
<path d="M1783.8 789.5L1785.6 794.5H1798.6L1800.2 789.5V796.2H1783.8Z" fill="#a6a6a6"/>
<path d="M1788.2 792.3V795M1792 791.2V795M1795.8 792.3V795" fill="none" stroke="#a6a6a6" stroke-width="1.2"/>
<rect x="1808" y="779" width="60" height="22" fill="#383838" rx="3"/>
<text x="1821.5" y="795.4" font-size="11.3" fill="#d2d2d2" textLength="20.5" lengthAdjust="spacing">100</text>
<rect x="50" y="811.3" width="8.5" height="10" fill="#b6b6b6"/>
<rect x="50" y="821.3" width="8.5" height="6" fill="#828282"/>
<rect x="58.5" y="811.3" width="7.5" height="16" fill="#505050"/>
<path d="M192 835.5V813H434Q437.5 813 437.5 816.5V835.5Z" fill="#282828" stroke="#181818" stroke-width="1"/>
<rect x="318" y="813" width="1" height="22.5" fill="#181818"/>
<path d="M70.5 836V813Q70.5 809.5 74 809.5H187.5Q191 809.5 191 813V836Z" fill="#323232"/>
<path d="M70.5 836V813Q70.5 809.5 74 809.5H187.5Q191.5 809.5 191.5 813V834Q191.5 835.5 193 835.5" fill="none" stroke="#1d1d1d" stroke-width="1"/>
<text x="85" y="827.8" font-size="11.4" fill="#ee8d1f" textLength="68" lengthAdjust="spacing">Node Graph</text>
<circle cx="170.1" cy="823.6" r="6.5" fill="#393939"/>
<path d="M167 820.5L173.2 826.7M173.2 820.5L167 826.7" fill="none" stroke="#8c8c8c" stroke-width="2"/>
<text x="207.3" y="828.6" font-size="11.4" fill="#c9c9c9" textLength="71.7" lengthAdjust="spacing">Curve Editor</text>
<circle cx="295.7" cy="823.8" r="6.5" fill="#383838"/>
<path d="M292.6 820.7L298.8 826.9M298.8 820.7L292.6 826.9" fill="none" stroke="#6e6e6e" stroke-width="2"/>
<text x="333.3" y="828.6" font-size="11.4" fill="#c9c9c9" textLength="66.7" lengthAdjust="spacing">Dope Sheet</text>
<circle cx="416.8" cy="823.8" r="6.5" fill="#383838"/>
<path d="M413.7 820.7L419.9 826.9M419.9 820.7L413.7 826.9" fill="none" stroke="#6e6e6e" stroke-width="2"/>
<defs>
<linearGradient id="gp" x1="0" y1="0" x2="0" y2="1"><stop offset="0" stop-color="#c795cc"/><stop offset="0.55" stop-color="#a67bad"/><stop offset="1" stop-color="#845c8c"/></linearGradient>
<linearGradient id="gg" x1="0" y1="0" x2="0" y2="1"><stop offset="0" stop-color="#e4e4e4"/><stop offset="0.5" stop-color="#bdbdbd"/><stop offset="1" stop-color="#8f8f8f"/></linearGradient>
</defs>
<line x1="665" y1="951.7" x2="677.254" y2="973.919" stroke="#000" stroke-width="2"/>
<path d="M681.6 981.8L672.785 974.099L679.79 970.236Z" fill="#000"/>
<path d="M684 1002H692L688 1009.3Z" fill="#000"/>
<rect x="648.5" y="982.5" width="79" height="19" fill="url(#gg)" stroke="#1b1b1b"/>
<text x="665.3" y="997" font-size="10" fill="#050208" textLength="46" lengthAdjust="spacing">Tracker1</text>
<circle cx="728" cy="982" r="4.2" fill="#c8474d"/>
<text x="728" y="984.6" font-size="7" fill="#f4dede" font-weight="bold" text-anchor="middle">A</text>
<line x1="728" y1="992" x2="863" y2="992" stroke="#58b55c" stroke-width="1.8"/>
<path d="M793 988.2L797.6 992L793 995.9" fill="none" stroke="#58b55c" stroke-width="1.4"/>
<line x1="879.7" y1="951.7" x2="892.114" y2="973.941" stroke="#f4b35c" stroke-width="2"/>
<path d="M896.5 981.8L887.646 974.144L894.632 970.245Z" fill="#f4b35c"/>
<rect x="863.5" y="982.5" width="79" height="19" fill="url(#gp)" stroke="#1b1b1b"/>
<text x="865.3" y="997" font-size="10" fill="#050208" textLength="75.2" lengthAdjust="spacing">CornerPin2D1</text>
<rect x="888" y="997.2" width="7.2" height="2.8" fill="#fff"/>
<rect x="895.2" y="997.2" width="7.8" height="2.8" fill="#8a0a8c"/>
<circle cx="943.2" cy="1002" r="4.2" fill="#5fdc78"/>
<rect x="942.4" y="1000" width="1.6" height="4" fill="#c8f5d0"/>
<line x1="903.1" y1="1002" x2="903.1" y2="1044" stroke="#f7b65c" stroke-width="2.5"/>
<path d="M899 1042H907L903 1053.5Z" fill="#f8c88a" stroke="#f4b35c" stroke-width="1"/>
<path d="M903 1023.5L907.3 1028L903 1032.5L898.7 1028Z" fill="#fff200"/>
<text x="899.5" y="1041.5" font-size="6.5" fill="#e8e8f8">1</text>
<rect x="863.4" y="1054.8" width="78.7" height="18.3" fill="url(#gp)"/>
<rect x="865.7" y="1056.4" width="74.5" height="14.8" fill="#fdb45e"/>
<text x="853.3" y="1069" font-size="10" fill="#050208" textLength="97.7" lengthAdjust="spacing">eSmartReformat1</text>
<circle cx="943" cy="1054" r="4.2" fill="#c8474d"/>
<text x="943" y="1056.6" font-size="7" fill="#f4dede" font-weight="bold" text-anchor="middle">A</text>
<circle cx="943.2" cy="1074" r="4.2" fill="#5fdc78"/>
<rect x="942.4" y="1072" width="1.6" height="4" fill="#c8f5d0"/>
<line x1="903" y1="1073.5" x2="903" y2="1109" stroke="#000" stroke-width="2"/>
<path d="M903 1118L899 1107L907 1107Z" fill="#000"/>
<rect x="863.5" y="1120.5" width="79" height="18" fill="url(#gp)" stroke="#1b1b1b"/>
<text x="865.3" y="1133.7" font-size="10" fill="#050208" textLength="75.2" lengthAdjust="spacing">CornerPin2D2</text>
<rect x="888" y="1134.2" width="7.2" height="2.8" fill="#fff"/>
<rect x="895.2" y="1134.2" width="7.8" height="2.8" fill="#8a0a8c"/>
<circle cx="943" cy="1118.8" r="4.2" fill="#c8474d"/>
<text x="943" y="1121.4" font-size="7" fill="#f4dede" font-weight="bold" text-anchor="middle">A</text>
<path d="M899 1139.2H907L903 1146.5Z" fill="#000"/>
<line x1="1066.7" y1="952" x2="1079.28" y2="973.62" stroke="#000" stroke-width="2"/>
<path d="M1083.8 981.4L1074.81 973.902L1081.73 969.88Z" fill="#000"/>
<path d="M1086 1002H1094L1090 1009.3Z" fill="#000"/>
<rect x="1050.5" y="982.5" width="79" height="19" fill="url(#gp)" stroke="#1b1b1b"/>
<text x="1057.6" y="997" font-size="10" fill="#050208" textLength="62.4" lengthAdjust="spacing">Transform1</text>
<rect x="1075" y="997" width="8" height="2.8" fill="#fff"/>
<rect x="1759" y="1294" width="97" height="63" fill="#dcdcdc"/>
<rect x="1760" y="1294" width="96" height="1" fill="#e8e0e0"/>
<rect x="1760" y="1295" width="96" height="1" fill="#f2b6b6"/>
<rect x="1760" y="1296" width="96" height="55" fill="#574c4c"/>
<rect x="1760" y="1351" width="96" height="1" fill="#f2b6b6"/>
<rect x="1760" y="1352" width="96" height="5" fill="#323232"/>
<rect x="1760.5" y="1296.5" width="3.5" height="3" fill="#2a2424" stroke="#e6e6e6" stroke-width="0.9"/>
<rect x="1782" y="1296" width="11" height="1.3" fill="#a8a4a4"/>
<rect x="1793" y="1296" width="21" height="1.3" fill="#4c0d4c"/>
<rect x="1814" y="1296" width="12" height="1.3" fill="#a07aa6"/>
<rect x="1841" y="1296" width="12" height="1.3" fill="#a07aa6"/>
<rect x="1818" y="1296" width="2" height="8.5" fill="#1d2a48"/>
<rect x="1813" y="1304" width="14" height="5" fill="#fbb960" rx="0.8"/>
<rect x="1814" y="1313.8" width="12" height="3.6" fill="url(#gp)"/>
<rect x="1807" y="1354" width="12" height="3" fill="url(#gg)"/>
<defs><linearGradient id="gi" x1="0" y1="0" x2="0" y2="1"><stop offset="0" stop-color="#b4b4b4"/><stop offset="1" stop-color="#8e8e8e"/></linearGradient></defs>
<rect x="11" y="39" width="20.2" height="1.8" fill="#a4a4a4"/>
<rect x="11" y="42" width="20.2" height="9.8" fill="url(#gi)"/>
<rect x="11" y="53" width="20.2" height="2" fill="#a4a4a4"/>
<path d="M11 46.1H19.5V43.5L24 47L19.5 50.5V47.9H11Z" fill="#2d2d2d"/>
<path d="M12 95.8L14.7 89L18.6 93.1Z" fill="#b0b0b0"/>
<path d="M14.8 88.8L18.2 81.6L27 90L18.8 93Z" fill="url(#gi)"/>
<path d="M19.2 80.2L21.8 78.2C25.5 79.5 28.5 82.6 29.6 86.4L27.9 88.8Z" fill="url(#gi)"/>
<circle cx="21" cy="126.8" r="9.2" fill="none" stroke="#a4a4a4" stroke-width="1.4"/>
<path d="M17.6 124.3L21 127.3L25.8 122.5" fill="none" stroke="#a4a4a4" stroke-width="1.5"/>
<rect x="11" y="159" width="20.3" height="4.6" fill="url(#gi)" rx="1"/>
<rect x="11" y="164.9" width="20.3" height="4.4" fill="url(#gi)" rx="1"/>
<rect x="11" y="170.4" width="20.3" height="4.5" fill="url(#gi)" rx="1"/>
<circle cx="21" cy="207.1" r="9.1" fill="url(#gi)"/>
<path d="M21 198V207.1L13.2 211.8M21 207.1L28.8 211.8" fill="none" stroke="#3a3a3a" stroke-width="1.2"/>
<pattern id="dots" width="2" height="2" patternUnits="userSpaceOnUse"><rect width="2" height="2" fill="#7a7a7a"/><rect width="1" height="1" fill="#3c3c3c"/><rect x="1" y="1" width="1" height="1" fill="#3c3c3c"/></pattern>
<circle cx="21" cy="246.9" r="10" fill="#a4a4a4"/><circle cx="21" cy="246.9" r="8.2" fill="url(#dots)"/>
<path d="M11.2 282.3V296.8H28.9Z" fill="url(#gi)"/>
<line x1="23.8" y1="284.6" x2="16.3" y2="294.2" stroke="#323232" stroke-width="4.8" stroke-linecap="round"/>
<line x1="28.2" y1="278.4" x2="24.4" y2="283.6" stroke="#a4a4a4" stroke-width="2.7" stroke-linecap="round"/>
<line x1="21.9" y1="282.7" x2="26.3" y2="286" stroke="#a4a4a4" stroke-width="1.7"/>
<line x1="23.6" y1="285" x2="16.6" y2="294" stroke="#a4a4a4" stroke-width="3.2" stroke-linecap="round"/>
<line x1="22.6" y1="286.8" x2="17.2" y2="293.6" stroke="#3a3a3a" stroke-width="1.2" stroke-linecap="round"/>
<path d="M21 318.4L30.4 322.8L21 327.2L11.6 322.8Z" fill="url(#gi)"/>
<path d="M11.6 326.6L14 325.5L21 328.8L28 325.5L30.4 326.6L21 331Z" fill="#a4a4a4"/>
<path d="M11.6 330.6L14 329.5L21 332.8L28 329.5L30.4 330.6L21 335Z" fill="#a4a4a4"/>
<path d="M21 358.5V375.5M12.5 367H29.5" fill="none" stroke="#a4a4a4" stroke-width="1.8"/>
<path d="M17.4 361.6L21 357.8L24.6 361.6M17.4 372.4L21 376.2L24.6 372.4M15.6 363.4L11.8 367L15.6 370.6M26.4 363.4L30.2 367L26.4 370.6" fill="none" stroke="#a4a4a4" stroke-width="1.8" stroke-linejoin="miter"/>
<path d="M21.5 397L31.3 400.4L21.8 403.6L11 400.2Z" fill="#b2b2b2"/>
<path d="M10.9 401.5L21.3 404.8V416.9L10.9 413.3Z" fill="#a2a2a2"/>
<path d="M22.3 404.8L31.3 401.6V413.3L22.3 416.9Z" fill="#949494"/>
<circle cx="21.00" cy="442.40" r="1.5" fill="#9c9c9c"/>
<circle cx="21.00" cy="438.70" r="0.95" fill="#868686"/>
<circle cx="21.00" cy="436.40" r="0.5" fill="#6a6a6a"/>
<circle cx="17.02" cy="444.70" r="1.5" fill="#9c9c9c"/>
<circle cx="13.81" cy="442.85" r="0.95" fill="#868686"/>
<circle cx="11.82" cy="441.70" r="0.5" fill="#6a6a6a"/>
<circle cx="17.02" cy="449.30" r="1.5" fill="#9c9c9c"/>
<circle cx="13.81" cy="451.15" r="0.95" fill="#868686"/>
<circle cx="11.82" cy="452.30" r="0.5" fill="#6a6a6a"/>
<circle cx="21.00" cy="451.60" r="1.5" fill="#9c9c9c"/>
<circle cx="21.00" cy="455.30" r="0.95" fill="#868686"/>
<circle cx="21.00" cy="457.60" r="0.5" fill="#6a6a6a"/>
<circle cx="24.98" cy="449.30" r="1.5" fill="#9c9c9c"/>
<circle cx="28.19" cy="451.15" r="0.95" fill="#868686"/>
<circle cx="30.18" cy="452.30" r="0.5" fill="#6a6a6a"/>
<circle cx="24.98" cy="444.70" r="1.5" fill="#9c9c9c"/>
<circle cx="28.19" cy="442.85" r="0.95" fill="#868686"/>
<circle cx="30.18" cy="441.70" r="0.5" fill="#6a6a6a"/>
<circle cx="21" cy="447" r="2.1" fill="#a4a4a4"/>
<circle cx="21" cy="487" r="10.1" fill="url(#gi)"/>
<text x="21.2" y="492.8" font-size="15.5" fill="#2f2f2f" font-weight="bold" text-anchor="middle">D</text>
<path d="M11.2 527C15 519.3 27 519.3 30.8 527C27 534.7 15 534.7 11.2 527Z" fill="#a4a4a4"/>
<circle cx="21" cy="527" r="4.1" fill="#2f2f2f"/>
<path d="M24.5 577.5L21.6 576.2L28.8 562L30.6 560.3C31.7 563 31.6 566 30.6 568.5Z" fill="#909090"/>
<path d="M11 567.5L21.5 557.5L28.3 556.6L29.6 562.5L20.6 576.3Z" fill="url(#gi)" stroke="#323232" stroke-width="0.9"/>
<circle cx="27.3" cy="558.9" r="0.9" fill="#2f2f2f"/>
<path d="M17.8 601.8C18 599.8 18.6 598.4 19.6 597.4L21.8 598V602.6L23.2 604.2H27L28.2 602.6V597.4L29.6 597C30.8 598.4 31.4 600.4 31.2 602.8C30.8 604.8 29.4 606.4 27.2 607.2V617H21.8V607.2C19.6 606.4 18 604.4 17.8 601.8Z" fill="#a4a4a4"/>
<path d="M11 607C10.8 608.6 11.2 609.8 11.9 610.8C12.5 611.8 13.2 612.5 14 613V617H18.6V613C19.8 612.2 20.6 610.2 20.6 607.6L19.4 607.4L17.8 610.6H14.6L12.6 607Z" fill="#a4a4a4"/>
<rect x="12" y="645" width="18.2" height="10" fill="url(#gi)"/>
<path d="M12.6 645L14.6 640.3H27.6L29.6 645" fill="none" stroke="#a4a4a4" stroke-width="1.3"/>
<rect x="9" y="675" width="24" height="24" fill="#4a4a4a" rx="2"/>
<line x1="14.2" y1="686.9" x2="11.8" y2="689.9" stroke="#f4f4f4" stroke-width="2.4" stroke-linecap="round"/>
<line x1="19.7" y1="692.9" x2="17.4" y2="695.9" stroke="#f4f4f4" stroke-width="2.4" stroke-linecap="round"/>
<defs><linearGradient id="gl" x1="0.2" y1="0.1" x2="0.6" y2="1"><stop offset="0" stop-color="#000"/><stop offset="0.6" stop-color="#1c1c1c"/><stop offset="1" stop-color="#a0a0a0"/></linearGradient></defs>
<circle cx="23.3" cy="684.6" r="7.6" fill="url(#gl)" stroke="#ececec" stroke-width="0.9"/>
<path d="M17.6 682.2C18.4 679.6 20.4 677.9 22.6 677.5L24.2 679.6L22.6 681.2L19.6 681.4Z" fill="#f2f2f2"/>
<path d="M25.4 677.8C27.8 678.2 29.6 679.9 30.3 682.2L29.2 683.4L30.4 686.2L28.8 689.4L26.8 690.6L25.8 687.6L26.8 684.6L25.2 682.6L26 680.2Z" fill="#eeeeee"/>
<circle cx="24.4" cy="682.9" r="0.8" fill="#111"/>
<circle cx="20.9" cy="727.9" r="10.1" fill="none" stroke="#989898" stroke-width="1.5"/>
<path d="M15.5 735.4C14.6 734 14.5 732.6 14.9 731.3C15.2 729.8 15.8 728.6 16.3 727.4C16.5 728.8 16.9 729.8 17.4 730.8C17.7 731.6 18 732.4 18.3 733.1C18.3 731.6 18.5 730.2 18.9 728.7C19.2 727.4 19.4 726.3 19.5 725.1C19.8 723.6 20.6 722.2 21.5 721.2C21.6 722.4 22 723.4 22.4 724.3C22.2 725.4 21.7 726.4 21.4 727.4C21.5 728.5 21.9 729.4 22.4 730.2C23.2 729.4 23.7 728.4 23.8 727.2C23.9 726 23.8 724.9 23.5 723.8C24.4 724.6 25 725.6 25.5 726.6C26.1 727.7 26.5 728.9 26.6 730.2C26.7 731.5 26.6 732.8 26.1 733.9C25.9 734.9 25.6 735.7 25.1 736.4C24 737.7 22.5 738.4 20.9 738.5C19.5 738.4 18.2 738 17.1 737.2C16.4 736.7 15.9 736.1 15.5 735.4Z" fill="#9c9c9c"/>
<circle cx="21" cy="769" r="10.1" fill="none" stroke="#9a9a9a" stroke-width="1.9"/>
<text x="21" y="774.6" font-size="17.5" fill="#a4a4a4" font-weight="bold" text-anchor="middle">e</text>
</svg>
</div>
</body></html>
